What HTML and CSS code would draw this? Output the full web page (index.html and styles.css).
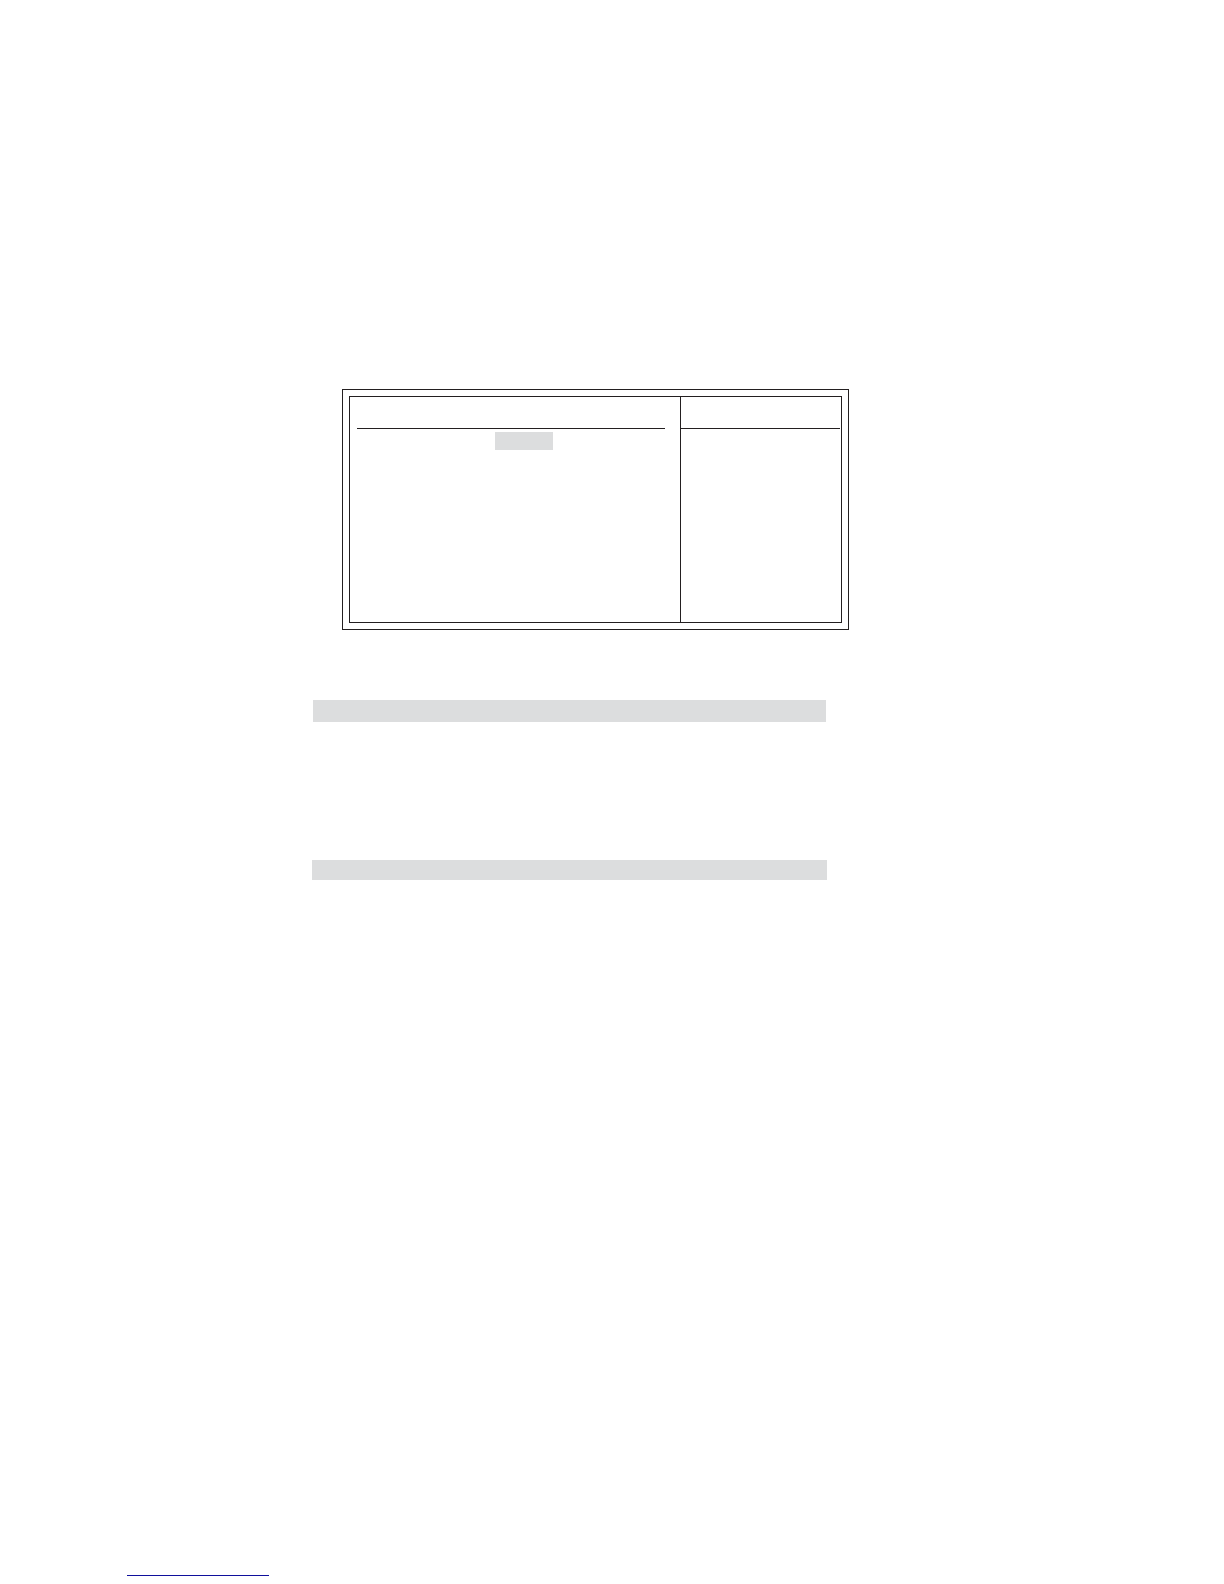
FILE: index.html
```
<!DOCTYPE html>
<html lang="en">
<head>
    <meta charset="UTF-8">
    <meta name="viewport" content="width=device-width, initial-scale=1.0">
    <title>Setup Screen</title>
    <link rel="stylesheet" href="styles.css">
</head>
<body>
    <main>
        <section class="frame">
            <div class="screen">
                <div class="options">
                    <div class="panel-head"></div>
                    <div class="selected"></div>
                </div>
                <aside class="help">
                    <div class="panel-head"></div>
                </aside>
            </div>
        </section>

        <section class="bars">
            <div class="bar"></div>
            <div class="bar bar-wide"></div>
        </section>
    </main>

    <footer>
        <a class="footer-link" href="#" aria-label="Back to top"></a>
    </footer>
</body>
</html>
```

FILE: styles.css
```
* {
    box-sizing: border-box;
}

body {
    font-family: "Liberation Sans", Arial, sans-serif;
    background: #ffffff;
    margin: 0;
    min-height: 100vh;
    display: flex;
    flex-direction: column;
}

main {
    padding: 389px 375px 0 312px;
}

/* Double outline around the setup screen */
.frame {
    margin-left: 30px;
    padding: 6px;
    border: 1px solid #231f20;
}

.screen {
    display: grid;
    grid-template-columns: 1fr 161px;
    min-height: 227px;
    border: 1px solid #231f20;
}

.options {
    padding: 0 15px 0 7px;
}

.help {
    padding-right: 1px;
    border-left: 1px solid #231f20;
}

.panel-head {
    height: 32px;
    border-bottom: 1px solid #231f20;
}

/* Highlighted value in the options list */
.selected {
    width: 58px;
    height: 18px;
    margin: 3px 0 0 138px;
    background: #dcddde;
}

.bars {
    display: flex;
    flex-direction: column;
    gap: 138px;
    margin: 70px 22px 0 0;
}

.bar {
    height: 22px;
    margin: 0 1px;
    background: #dcddde;
}

.bar-wide {
    height: 20px;
    margin: 0;
}

footer {
    margin-top: auto;
    padding: 0 127px 8px;
}

.footer-link {
    display: block;
    width: 142px;
    height: 16px;
    border-bottom: 1px solid #10109c;
}
```
